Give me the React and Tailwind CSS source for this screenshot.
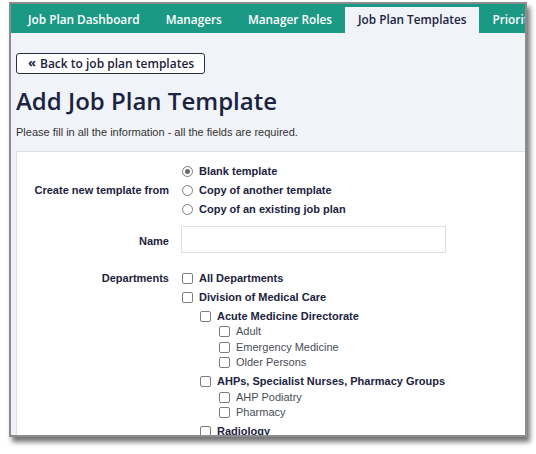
import React from 'react';

const tabs = ['Job Plan Dashboard', 'Managers', 'Manager Roles', 'Job Plan Templates', 'Priorities'];

const departments = [
  { name: 'All Departments', level: 0 },
  { name: 'Division of Medical Care', level: 0 },
  { name: 'Acute Medicine Directorate', level: 1 },
  { name: 'Adult', level: 2 },
  { name: 'Emergency Medicine', level: 2 },
  { name: 'Older Persons', level: 2 },
  { name: 'AHPs, Specialist Nurses, Pharmacy Groups', level: 1 },
  { name: 'AHP Podiatry', level: 2 },
  { name: 'Pharmacy', level: 2 },
  { name: 'Radiology', level: 1 },
];

function Radio({ checked }) {
  return (
    <span className="w-[11px] h-[11px] rounded-full border border-[#7d7d7d] bg-white flex items-center justify-center shrink-0">
      {checked && <span className="w-[5px] h-[5px] rounded-full bg-[#6a6a6a]" />}
    </span>
  );
}

function Checkbox() {
  return <span className="w-[11px] h-[11px] rounded-[2px] border border-[#7d7d7d] bg-white shrink-0" />;
}

export default function App() {
  return (
    <div className="w-[536px] h-[454px] bg-white pt-[2px] pl-[9px] font-['Liberation_Sans',Arial,sans-serif]">
      <div className="w-[518px] h-[435px] border-2 border-[#8c8c8c] bg-[#f0f3f7] overflow-hidden shadow-[3px_5px_5px_rgba(0,0,0,0.55)] flex flex-col">
        {/* top nav */}
        <div className="h-[29px] bg-[#1b9985] flex items-end pl-[4px] shrink-0 font-['Open_Sans',sans-serif] font-semibold text-[11.8px] whitespace-nowrap">
          {tabs.map((t) => (
            <div
              key={t}
              className={
                t === 'Job Plan Templates'
                  ? 'h-[26px] px-[13px] flex items-center pb-[1px] bg-[#f0f3f7] text-[#1c2340]'
                  : 'h-[26px] px-[13px] flex items-center pb-[1px] text-white'
              }
            >
              {t}
            </div>
          ))}
        </div>

        <div className="px-[5px] flex flex-col">
          <button className="mt-[20px] w-[189px] h-[21px] border border-[#2a2f45] rounded-[3px] bg-white flex items-center pl-[11px] gap-[4px] text-[12px] font-semibold text-[#1c2340] font-['Open_Sans',sans-serif]">
            <span className="text-[13px] font-bold leading-none -mt-[2px]">«</span>
            <span>Back to job plan templates</span>
          </button>

          <h1 className="mt-[12px] text-[24px] leading-[30px] font-semibold text-[#1c2340] font-['Open_Sans',sans-serif]">
            Add Job Plan Template
          </h1>

          <p className="mt-[9px] text-[11px] leading-[14px] text-[#333]">
            Please fill in all the information - all the fields are required.
          </p>

          <div className="mt-[12px] w-[560px] h-[400px] bg-white border border-[#dcdfe3] pt-[11.5px] text-[11px]">
            {/* template source */}
            <div className="flex">
              <div className="w-[152px] flex items-center justify-end font-bold text-[#1c2340]">
                Create new template from
              </div>
              <div className="ml-[13px] flex flex-col">
                {['Blank template', 'Copy of another template', 'Copy of an existing job plan'].map((o, i) => (
                  <div key={o} className={`h-[15.5px] flex items-center gap-[6px] font-bold text-[#1c2340] ${i > 0 ? 'mt-[3.5px]' : ''}`}>
                    <Radio checked={i === 0} />
                    <span>{o}</span>
                  </div>
                ))}
              </div>
            </div>

            {/* name */}
            <div className="flex mt-[8.5px]">
              <div className="w-[152px] flex items-center justify-end font-bold text-[#1c2340] pt-[4px]">Name</div>
              <div className="ml-[12px] w-[265px] h-[27px] border border-[#dcdfe3] bg-white" />
            </div>

            {/* departments */}
            <div className="flex mt-[16px]">
              <div className="w-[152px] h-[19px] flex items-center justify-end font-bold text-[#1c2340]">Departments</div>
              <div className="ml-[13px] flex flex-col">
                {departments.map((d, i) => (
                  <div
                    key={d.name}
                    className={
                      d.level === 2
                        ? 'h-[15.5px] flex items-center gap-[6px] ml-[37px] text-[#4a4d57]'
                        : `h-[15.5px] flex items-center gap-[6px] font-bold text-[#1c2340] ${i > 0 ? 'mt-[3.5px]' : 'mt-[1.75px]'} ${d.level === 1 ? 'ml-[18px]' : ''}`
                    }
                  >
                    <Checkbox />
                    <span>{d.name}</span>
                  </div>
                ))}
              </div>
            </div>
          </div>
        </div>
      </div>
    </div>
  );
}
